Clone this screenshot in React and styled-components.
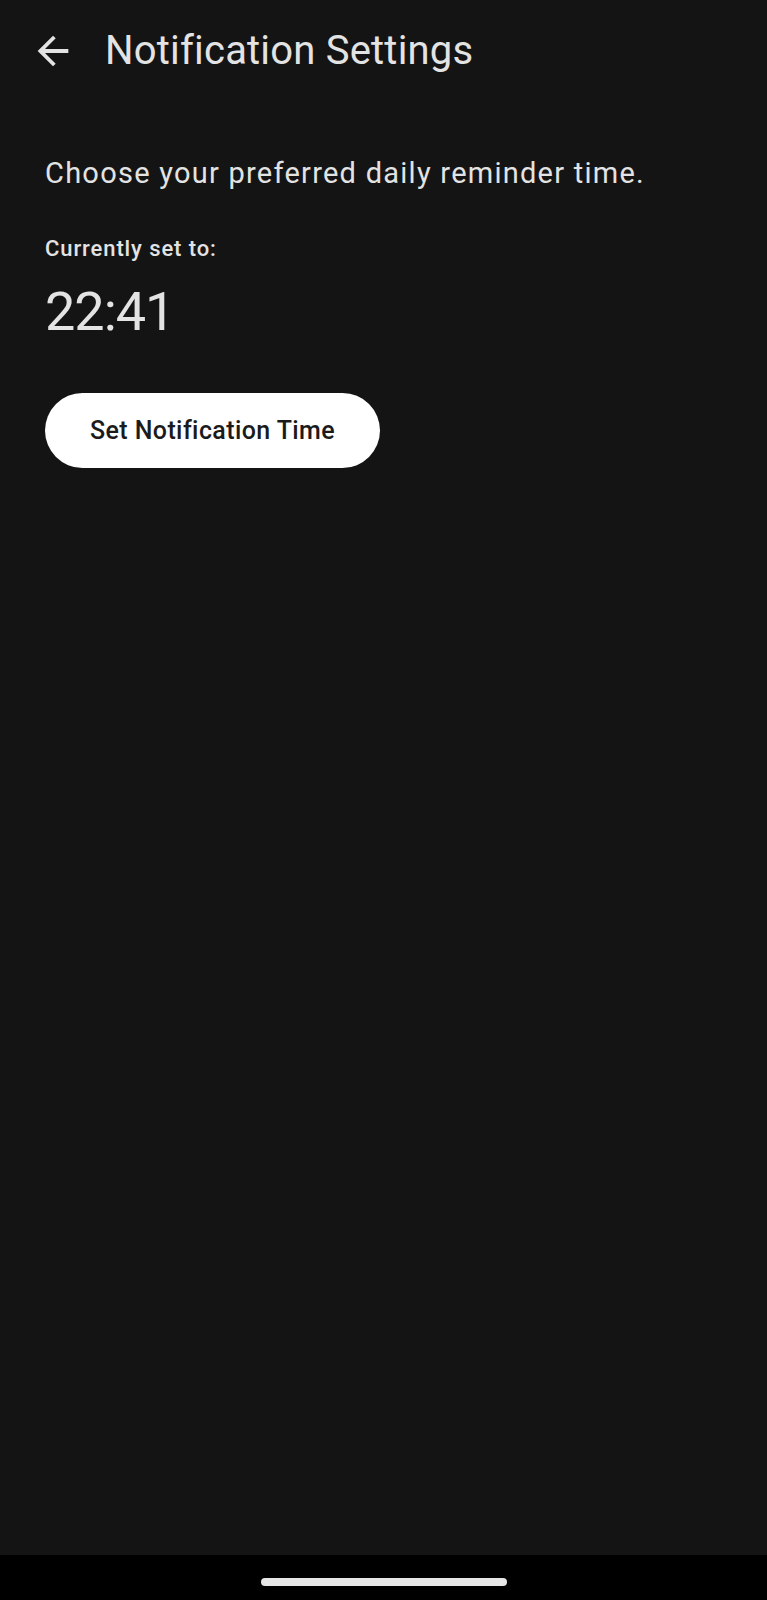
import React from "react";
import styled, { createGlobalStyle } from "styled-components";

const GlobalStyle = createGlobalStyle`
  html, body {
    margin: 0;
    padding: 0;
    background: #141414;
  }
  * {
    box-sizing: border-box;
  }
`;

const Screen = styled.div`
  width: 767px;
  min-height: 1600px;
  display: flex;
  flex-direction: column;
  background: #141414;
  font-family: Roboto, "Noto Sans", sans-serif;
  color: #e3e3e3;
`;

const Header = styled.header`
  height: 102px;
  display: flex;
  align-items: center;
  gap: 29px;
  padding-left: 30px;
`;

const BackButton = styled.button`
  width: 46px;
  height: 46px;
  padding: 0;
  border: none;
  background: transparent;
  color: #e3e3e3;
  display: flex;
  align-items: center;
  justify-content: center;
  cursor: pointer;

  svg {
    width: 46px;
    height: 46px;
  }
`;

const Title = styled.h1`
  margin: 0;
  font-size: 40px;
  line-height: 48px;
  font-weight: 400;
  letter-spacing: 0.2px;
  color: #e3e3e3;
`;

const Content = styled.main`
  flex: 1;
  display: flex;
  flex-direction: column;
  align-items: flex-start;
  padding: 53px 45px 0;
`;

const Intro = styled.p`
  margin: 0;
  font-size: 29px;
  line-height: 36px;
  letter-spacing: 1.25px;
  color: #e3e3e3;
`;

const Label = styled.p`
  margin: 44px 0 0;
  font-size: 22px;
  line-height: 28px;
  font-weight: 500;
  letter-spacing: 0.9px;
  color: #e3e3e3;
`;

const TimeValue = styled.div`
  margin-top: 17px;
  font-size: 54px;
  line-height: 64px;
  font-weight: 400;
  letter-spacing: -1px;
  color: #e3e3e3;
`;

const PillButton = styled.button`
  margin-top: 49px;
  height: 75px;
  padding: 0 45px;
  border: none;
  border-radius: 38px;
  background: #ffffff;
  color: #1b1b1b;
  font-family: Roboto, "Noto Sans", sans-serif;
  font-size: 25px;
  font-weight: 500;
  letter-spacing: 0.4px;
  cursor: pointer;
`;

const NavBar = styled.div`
  height: 45px;
  background: #000000;
  display: flex;
  justify-content: center;
  padding-top: 23px;
`;

const Handle = styled.div`
  width: 246px;
  height: 8px;
  border-radius: 4px;
  background: #e6e6e6;
`;

function BackArrow() {
  return (
    <svg viewBox="0 0 24 24" fill="currentColor" aria-hidden="true">
      <path d="M20 11H7.83l5.59-5.59L12 4l-8 8 8 8 1.41-1.41L7.83 13H20v-2z" />
    </svg>
  );
}

export default function App() {
  return (
    <>
      <GlobalStyle />
      <Screen>
        <Header>
          <BackButton aria-label="Back">
            <BackArrow />
          </BackButton>
          <Title>Notification Settings</Title>
        </Header>
        <Content>
          <Intro>Choose your preferred daily reminder time.</Intro>
          <Label>Currently set to:</Label>
          <TimeValue>22:41</TimeValue>
          <PillButton>Set Notification Time</PillButton>
        </Content>
        <NavBar>
          <Handle />
        </NavBar>
      </Screen>
    </>
  );
}
